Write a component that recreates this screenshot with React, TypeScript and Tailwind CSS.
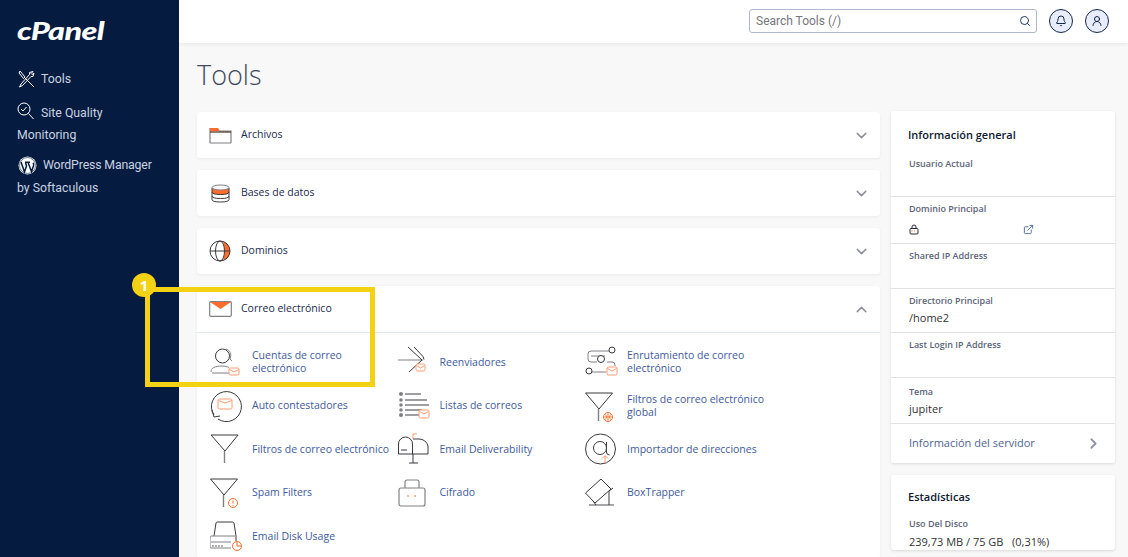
import { ChevronDown, ChevronUp, ChevronRight, Search, Bell, UserRound, ExternalLink } from 'lucide-react';
import type { ReactNode } from 'react';

const OR = '#ff6c2c';
const INK = '#3a3a3e';
const GR = '#808084';

function Ico({ children, w = 36, h = 32 }: { children: ReactNode; w?: number; h?: number }) {
  return (
    <svg width={w} height={h} viewBox={`0 0 ${w} ${h}`} fill="none" strokeWidth="1" stroke={INK} className="shrink-0">
      {children}
    </svg>
  );
}

// small orange envelope used as a badge on most of the email icons
function Env({ x, y, w = 9, h = 7 }: { x: number; y: number; w?: number; h?: number }) {
  return (
    <g stroke="#ff9a6e" strokeWidth="1">
      <rect x={x} y={y} width={w} height={h} rx="1.5" fill="#fff" />
      <path d={`M${x + 0.5} ${y + 1.5}l${w / 2 - 0.5} 2.5l${w / 2 - 0.5} -2.5`} />
    </g>
  );
}

const toolIcons: Record<string, ReactNode> = {
  cuentas: (
    <Ico>
      <circle cx="12.500" cy="10" r="7" />
      <path d="M16 3c4 1 6 5 4 10l2 2" stroke={GR} />
      <path d="M1 26c0-4 4-6 11-6c3 0 5 .5 7 1.500M2 27h17" stroke={GR} />
      <Env x={19} y={22} w={10} h={7} />
    </Ico>
  ),
  reenv: (
    <Ico>
      <path d="M0 14h25" stroke={GR} />
      <path d="M10 1l14 13l-13 12" />
      <path d="M16 1l9 9.500l1 3" />
      <Env x={18} y={18} w={9} h={7} />
    </Ico>
  ),
  enrut: (
    <Ico>
      <path d="M26 5H6a3 3 0 0 0-3 3v5a3 3 0 0 0 3 3h6M20 10H6M22 16h5a3 3 0 0 1 3 3v1M7 26h14" stroke={GR} />
      <circle cx="27" cy="4" r="3" fill="#fff" />
      <circle cx="16" cy="13" r="3.500" fill="#fff" />
      <circle cx="4" cy="25" r="3" fill="#fff" />
      <Env x={22} y={21} w={10} h={8} />
    </Ico>
  ),
  auto: (
    <Ico>
      <path d="M8 29A15 15 0 1 0 4 25" />
      <path d="M2 20l2 7l6-1" />
      <Env x={8} y={9} w={14} h={10} />
    </Ico>
  ),
  listas: (
    <Ico>
      <g fill={GR} stroke="none">
        <circle cx="3" cy="4" r="2" /><circle cx="3" cy="10" r="1.800" /><circle cx="3" cy="15" r="1.800" /><circle cx="3" cy="20" r="1.800" /><circle cx="3" cy="25" r="2" />
      </g>
      <path d="M7 4h16M7 15h24M7 25h14" stroke={GR} strokeWidth="1.500" />
      <path d="M7 10h22M7 20h17" />
      <Env x={21} y={20} w={10} h={8} />
    </Ico>
  ),
  filtroG: (
    <Ico>
      <path d="M0.500 3h27L14 19L0.500 3z" />
      <path d="M13.500 19v12" stroke={GR} strokeWidth="1.400" />
      <g stroke={OR}>
        <circle cx="23" cy="27" r="4.500" fill="#fff" />
        <path d="M18.500 27h9M23 22.500v9M20.500 24.500q2.500 2.500 0 5M25.500 24.500q-2.500 2.500 0 5" strokeWidth="0.800" />
      </g>
    </Ico>
  ),
  filtro: (
    <Ico>
      <path d="M1 2h27L15 18L1 2z" />
      <path d="M14.500 18v12" stroke={GR} strokeWidth="1.400" />
    </Ico>
  ),
  deliver: (
    <Ico>
      <path d="M0.500 21V11a7 7 0 0 1 14 0v10H0.500z" />
      <path d="M15 6h6a9 9 0 0 1 9 7v8H14" />
      <path d="M3 17h6" />
      <path d="M15 21v9M11 30h9" />
      <path d="M15 6V1h4" stroke="#ff9a6e" />
    </Ico>
  ),
  import: (
    <Ico>
      <circle cx="15.500" cy="16" r="15" />
      <circle cx="15" cy="15" r="6.500" />
      <path d="M21.500 9v10q0 3 3 3" />
      <path d="M20 30v-7M17 25.500l3-3l3 3" stroke="#ff9a6e" />
    </Ico>
  ),
  spam: (
    <Ico>
      <path d="M0.500 2h27L14 18L0.500 2z" />
      <path d="M13.500 18v12" stroke={GR} strokeWidth="1.400" />
      <g stroke={OR}>
        <circle cx="23" cy="26" r="4.500" fill="#fff" />
        <path d="M23 23.500v3M23 27.800v1" />
      </g>
    </Ico>
  ),
  cifrado: (
    <Ico>
      <rect x="1" y="11" width="26" height="18" rx="2" stroke={GR} strokeWidth="1.200" />
      <path d="M7 11V5a2 2 0 0 1 2-2h10a2 2 0 0 1 2 2v6" stroke={GR} strokeWidth="1.200" />
      <circle cx="10" cy="19" r="1" fill="#ff9a6e" stroke="none" />
      <circle cx="17" cy="19" r="1" fill="#ff9a6e" stroke="none" />
    </Ico>
  ),
  box: (
    <Ico>
      <path d="M0.500 16L16 2L26 12L10 26L0.500 16z" />
      <path d="M4 28h25" stroke={GR} strokeWidth="1.400" />
      <path d="M24 14v14M24 14l4-3" />
      <path d="M8 24l3 4" />
    </Ico>
  ),
  disk: (
    <Ico>
      <path d="M4 16L6 3q.3-1 1.500-1h15q1.200 0 1.500 1l2 13v5" />
      <path d="M1 16h24" stroke={GR} />
      <path d="M1 16q-1 0-1 2v9q0 1 1 1h20M21 22H1" stroke={GR} />
      <path d="M3 25v2M6 25v2M9 25v2M12 25v2" strokeWidth="0.800" />
      <circle cx="27" cy="26" r="4.500" stroke={OR} fill="#fff" />
      <path d="M27 22v4h4" stroke={OR} />
    </Ico>
  ),
};

const tools: [string, string][] = [
  ['cuentas', 'Cuentas de correo electrónico'],
  ['reenv', 'Reenviadores'],
  ['enrut', 'Enrutamiento de correo electrónico'],
  ['auto', 'Auto contestadores'],
  ['listas', 'Listas de correos'],
  ['filtroG', 'Filtros de correo electrónico global'],
  ['filtro', 'Filtros de correo electrónico'],
  ['deliver', 'Email Deliverability'],
  ['import', 'Importador de direcciones'],
  ['spam', 'Spam Filters'],
  ['cifrado', 'Cifrado'],
  ['box', 'BoxTrapper'],
  ['disk', 'Email Disk Usage'],
];

function Section({ icon, label, h, open }: { icon: ReactNode; label: string; h: string; open?: boolean }) {
  return (
    <div className={`flex items-center pl-[12px] pr-[10px] ${h}`}>
      <span className="flex w-[32px] justify-start">{icon}</span>
      <span className="text-[10.5px] text-[#1b2a4e]">{label}</span>
      <span className="ml-auto text-[#8a8f98]">
        {open ? <ChevronUp size={17} strokeWidth={2} /> : <ChevronDown size={17} strokeWidth={2} />}
      </span>
    </div>
  );
}

function Stat({ label, children, h }: { label: string; children?: ReactNode; h: string }) {
  return (
    <div className={`border-b border-[#e2e2e2] px-[18px] ${h}`}>
      <div className="text-[9px] font-semibold text-[#5b6478]">{label}</div>
      {children}
    </div>
  );
}

export default function App() {
  return (
    <div className="relative flex h-[557px] w-[1128px] overflow-hidden bg-[#f8f8f8] font-['Open_Sans',sans-serif]">
      <aside className="w-[179px] shrink-0 bg-[#051b3f] pl-[17px] font-['Roboto',sans-serif] text-[12.300px] text-[#c9d3e2]">
        <div className="mt-[13px] h-[36px] origin-left scale-x-[1.35] font-['Lato',sans-serif] text-[24px] leading-[36px] font-black tracking-[-0.5px] text-white italic">cPanel</div>
        <nav className="mt-[18px]">
          <div className="flex h-[24px] items-center">
            <svg width="18" height="18" viewBox="0 0 18 18" fill="none" stroke="#fff" strokeWidth="1" className="ml-[1px]">
              <path d="M2 1l5 6l-1.500 1.500L1 3zM7 8l9 9M15 1.500l-3.500 1v2L3 14l-1.500 3l3-1.500L13 6.500h2l1-3.500-2 1.500-1-1z" />
            </svg>
            <span className="ml-[5px]">Tools</span>
          </div>
          <div className="mt-[11px] leading-[22px]">
            <div className="flex h-[22px] items-center">
              <svg width="18" height="20" viewBox="0 0 18 20" fill="none" stroke="#fff" strokeWidth="1" className="mb-[2px]">
                <circle cx="7" cy="7" r="6" />
                <path d="M4 7l2 2l3.500-4M11.500 11.500l5 5.500" />
              </svg>
              <span className="ml-[6px]">Site Quality</span>
            </div>
            <div>Monitoring</div>
          </div>
          <div className="mt-[8px] leading-[23px]">
            <div className="flex h-[23px] items-center">
              <svg width="19" height="19" viewBox="0 0 19 19" className="ml-[1px]">
                <circle cx="9.500" cy="9.500" r="9" fill="#fff" />
                <circle cx="9.500" cy="9.500" r="8" fill="none" stroke="#051b3f" strokeWidth="0.600" />
                <path d="M3 6l3.500 10l2-6l-1-3.500M7 6.300h5M10 6.300l3.500 9.500l2-6q.5-2-.5-3" stroke="#051b3f" fill="none" strokeWidth="1.500" />
              </svg>
              <span className="ml-[6px] tracking-[-0.15px]">WordPress Manager</span>
            </div>
            <div>by Softaculous</div>
          </div>
        </nav>
      </aside>

      <div className="flex min-w-0 flex-1 flex-col">
        <header className="flex h-[43px] shrink-0 items-center justify-end bg-white pb-[2px] pr-[19px] shadow-[0_1px_4px_rgba(0,0,0,0.08)]">
          <div className="flex h-[24px] w-[288px] items-center justify-between rounded-[3px] border border-[#aeb8cf] bg-white pl-[6px] pr-[5px] font-['Roboto',sans-serif] text-[12px] text-[#75757a]">
            <span>Search Tools (/)</span>
            <Search size={12} className="text-[#1d3a66]" />
          </div>
          <div className="ml-[12px] flex h-[24px] w-[24px] items-center justify-center rounded-full border border-[#14264f] bg-[#e9edfb]">
            <Bell size={12} className="text-[#14264f]" />
          </div>
          <div className="ml-[12px] flex h-[24px] w-[24px] items-center justify-center rounded-full border border-[#14264f] bg-[#e9edfb]">
            <UserRound size={12} className="text-[#14264f]" />
          </div>
        </header>

        <main className="flex min-h-0 flex-1 pl-[18px]">
          <div className="w-[683px] shrink-0">
            <h1 className="mt-[13px] h-[56px] text-[27px] leading-[37px] font-light text-[#3f4a5c]">Tools</h1>
            <div className="flex flex-col gap-[12px]">
              <div className="rounded-[3px] bg-white shadow-[0_1px_3px_rgba(0,0,0,0.06)]">
                <Section
                  h="h-[46px]"
                  label="Archivos"
                  icon={
                    <svg width="23" height="17" viewBox="0 0 23 17" fill="none" stroke={GR} strokeWidth="1.200">
                      <path d="M1 5V1.500h7.500L10 4h12v11.500q0 .5-.5.500H1.500q-.5 0-.5-.5z" />
                      <path d="M1 1h8l1.500 3H1z" fill={OR} stroke="none" />
                      <path d="M1 5h21" stroke="#4a2a20" />
                    </svg>
                  }
                />
              </div>
              <div className="rounded-[3px] bg-white shadow-[0_1px_3px_rgba(0,0,0,0.06)]">
                <Section
                  h="h-[46px]"
                  label="Bases de datos"
                  icon={
                    <svg width="19" height="19" viewBox="0 0 19 19" fill="none" stroke={INK} strokeWidth="1" className="ml-[2px]">
                      <path d="M1 4v4q0 2.500 8.500 2.500T18 8V4z" fill={OR} />
                      <ellipse cx="9.500" cy="3.500" rx="8.500" ry="2.500" fill="#f7f7f7" stroke={GR} />
                      <path d="M1 8v4q0 2.500 8.500 2.500T18 12V8M1 12v3.500Q1 18 9.500 18T18 15.500V12" />
                    </svg>
                  }
                />
              </div>
              <div className="rounded-[3px] bg-white shadow-[0_1px_3px_rgba(0,0,0,0.06)]">
                <Section
                  h="h-[46px]"
                  label="Dominios"
                  icon={
                    <svg width="22" height="22" viewBox="0 0 22 22" fill="none" stroke={INK} strokeWidth="1">
                      <path d="M14 1.500A10 10 0 0 1 14 20.500Q17 11 14 1.500z" fill={OR} stroke="none" />
                      <circle cx="11" cy="11" r="10" />
                      <ellipse cx="11" cy="11" rx="4.500" ry="10" />
                      <path d="M1 11h20" />
                    </svg>
                  }
                />
              </div>
              <div className="rounded-[3px] bg-white shadow-[0_1px_3px_rgba(0,0,0,0.06)]">
                <div className="border-b border-[#e3e8ef]">
                  <Section
                    h="h-[46px]"
                    open
                    label="Correo electrónico"
                    icon={
                      <svg width="23" height="16" viewBox="0 0 23 16" fill="none" stroke={GR} strokeWidth="1.200">
                        <rect x="0.700" y="0.700" width="21.600" height="14.600" rx="1" />
                        <path d="M1 1h21l-10.500 7z" fill={OR} stroke="none" />
                      </svg>
                    }
                  />
                </div>
                <div className="grid w-[570px] grid-cols-[187.500px_187.500px_1fr] auto-rows-[43.500px] pl-[13px] pt-[7.500px]">
                  {tools.map(([k, label]) => (
                    <div key={k} className="flex items-center">
                      <span className="flex w-[42px] shrink-0 justify-start">{toolIcons[k]}</span>
                      <span className="text-[10.5px] leading-[13px] text-[#3e5a9c]">{label}</span>
                    </div>
                  ))}
                </div>
              </div>
            </div>
          </div>

          <div className="ml-[11px] mt-[68px] flex w-[224px] shrink-0 flex-col gap-[12px]">
            <div className="rounded-[3px] bg-white shadow-[0_1px_3px_rgba(0,0,0,0.12)]">
              <div className="px-[17px] pt-[16px] text-[11px] leading-[16px] font-semibold text-[#0e1a30]">Información general</div>
              <Stat label="Usuario Actual" h="h-[54px] pt-[14px]" />
              <Stat label="Dominio Principal" h="h-[47px] pt-[5px]">
                <div className="mt-[8px] flex items-center justify-between pr-[63px]">
                  <svg width="10" height="11" viewBox="0 0 10 11" fill="none" stroke="#2a2a35" strokeWidth="1">
                    <rect x="1" y="4.500" width="8" height="5.500" rx="1" />
                    <path d="M3 4.500V3a2 2 0 0 1 4 0v1.500" />
                    <path d="M2.500 7h5" stroke={OR} strokeDasharray="1 1.500" />
                  </svg>
                  <ExternalLink size={11} className="text-[#4a6a9c]" />
                </div>
              </Stat>
              <Stat label="Shared IP Address" h="h-[45px] pt-[5px]" />
              <Stat label="Directorio Principal" h="h-[44px] pt-[5px]">
                <div className="mt-[2px] text-[11px] leading-[16px] text-[#333]">/home2</div>
              </Stat>
              <Stat label="Last Login IP Address" h="h-[45px] pt-[5px]" />
              <Stat label="Tema" h="h-[46px] pt-[7px]">
                <div className="mt-[2px] text-[11px] leading-[16px] text-[#333]">jupiter</div>
              </Stat>
              <div className="flex h-[39px] items-center justify-between pl-[18px] pr-[13px] text-[11px] text-[#4d6390]">
                Información del servidor
                <ChevronRight size={17} strokeWidth={2.500} className="text-[#8c93a3]" />
              </div>
            </div>
            <div className="rounded-[3px] bg-white pt-[14px] shadow-[0_1px_3px_rgba(0,0,0,0.12)]">
              <div className="px-[17px] text-[11px] leading-[16px] font-semibold text-[#0e1a30]">Estadísticas</div>
              <div className="mt-[12px] px-[18px] text-[9px] font-semibold text-[#5b6478]">Uso Del Disco</div>
              <div className="mt-[3px] px-[18px] text-[11px] leading-[16px] text-[#333]">239,73 MB / 75 GB&nbsp;&nbsp;&nbsp;(0,31%)</div>
            </div>
          </div>
        </main>
      </div>

      {/* tutorial highlight drawn over the email section */}
      <div className="absolute left-[145px] top-[287px] h-[100px] w-[230px] border-[5px] border-[#f3d113]" />
      <div className="absolute left-[132px] top-[273px] flex h-[24px] w-[24px] items-center justify-center rounded-full bg-[#f3d113] text-[15px] font-bold text-white">1</div>
    </div>
  );
}
